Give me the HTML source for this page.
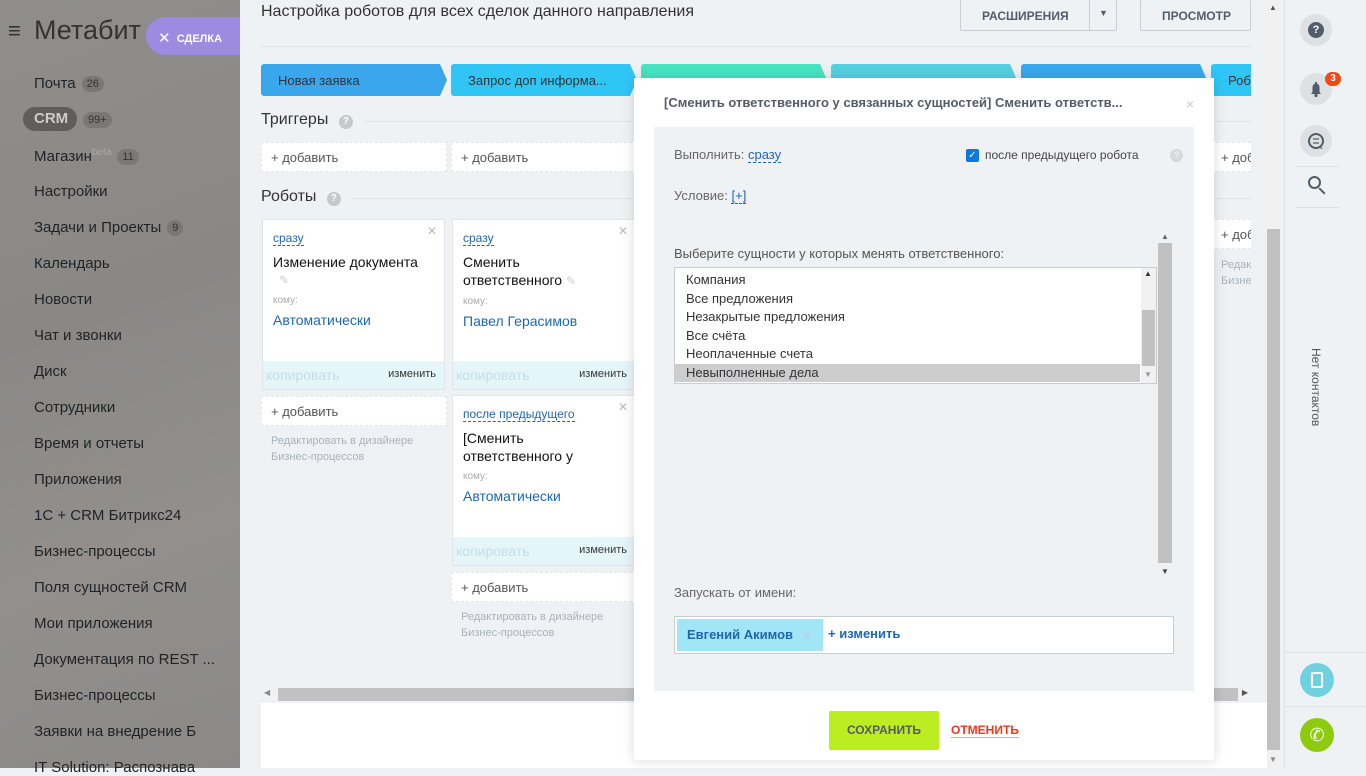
<!DOCTYPE html>
<html><head><meta charset="utf-8"><style>
*{box-sizing:border-box;margin:0;padding:0}
body{width:1366px;height:768px;overflow:hidden;position:relative;font-family:"Liberation Sans","DejaVu Sans",sans-serif;background:#eef2f4}
.abs{position:absolute}
#side{left:0;top:0;width:240px;height:768px;background:linear-gradient(160deg,#8f8e8c,#8a8886 40%,#928f8c 70%,#8b8987)}
.nav{position:absolute;left:34px;font-size:15px;color:#1f2326;white-space:nowrap}
.cnt{display:inline-block;background:#7a7876;color:#333;font-size:11px;border-radius:9px;padding:2px 5px;margin-left:6px;vertical-align:1px}
#main{left:240px;top:0;width:1028px;height:768px;background:#eef2f4}
.stage{position:absolute;top:64px;height:32px;color:#333;font-size:13px;padding:9px 0 0 17px;border-radius:3px 0 0 3px;clip-path:polygon(0 0,calc(100% - 7px) 0,100% 50%,calc(100% - 7px) 100%,0 100%);white-space:nowrap;overflow:hidden}
.addbox{position:absolute;background:#fff;border:1px dashed #e3e7ea;height:30px;font-size:13px;color:#555;padding:7px 0 0 9px;white-space:nowrap;overflow:hidden}
.card{position:absolute;background:#fff;border:1px solid #e0e5e8;width:183px}
.dash{color:#2067b0;border-bottom:1px dashed #2067b0;font-size:12px}
.x{position:absolute;right:7px;top:4px;color:#bbb;font-size:12px}
.ct{font-size:14px;color:#111;line-height:18px}
.komu{font-size:10px;color:#aaa}
.who{font-size:14px;color:#2067b0}
.cf{position:absolute;left:0;right:0;bottom:0;height:28px;background:#e5f6fb}
.cf .c{position:absolute;left:3px;top:6px;color:#c5dde5;font-size:14px}
.cf .e{position:absolute;right:8px;top:7px;color:#333;font-size:11px}
.hint{position:absolute;font-size:11px;color:#aab2b8;line-height:16px;white-space:nowrap;overflow:hidden}
#modal{left:634px;top:78px;width:580px;height:682px;background:#fff;box-shadow:0 0 12px rgba(0,0,0,.15)}
</style></head><body>
<div id="side" class="abs">
 <div class="abs" style="left:8px;top:18px;font-size:22px;color:#333">≡</div>
 <div class="abs" style="left:34px;top:15px;font-size:27px;color:#333">Метабит</div>
 <div class="abs" style="left:146px;top:17px;width:100px;height:38px;background:#9c8be0;border-radius:19px 0 0 19px;color:#fff;font-size:11px;font-weight:bold;padding:12px 0 0 12px"><span style="font-size:15px;font-weight:normal;vertical-align:-1px">✕</span>&nbsp; СДЕЛКА</div>
 <div class="nav" style="top:75px">Почта<span class="cnt">26</span></div>
 <div class="abs" style="left:23px;top:107px;width:54px;height:24px;background:#5f5e5c;border-radius:12px;color:#ccc;font-size:15px;font-weight:bold;padding:3px 0 0 11px">CRM</div>
 <div class="abs" style="left:83px;top:111px"><span class="cnt" style="margin:0">99+</span></div>
 <div class="nav" style="top:147px">Магазин<sup style="font-size:10px;color:#aaa">beta</sup><span class="cnt">11</span></div>
 <div class="nav" style="top:183px">Настройки</div>
 <div class="nav" style="top:219px">Задачи и Проекты<span class="cnt">9</span></div>
 <div class="nav" style="top:255px">Календарь</div>
 <div class="nav" style="top:291px">Новости</div>
 <div class="nav" style="top:327px">Чат и звонки</div>
 <div class="nav" style="top:363px">Диск</div>
 <div class="nav" style="top:399px">Сотрудники</div>
 <div class="nav" style="top:435px">Время и отчеты</div>
 <div class="nav" style="top:471px">Приложения</div>
 <div class="nav" style="top:507px">1С + CRM Битрикс24</div>
 <div class="nav" style="top:543px">Бизнес-процессы</div>
 <div class="nav" style="top:579px">Поля сущностей CRM</div>
 <div class="nav" style="top:615px">Мои приложения</div>
 <div class="nav" style="top:651px">Документация по REST ...</div>
 <div class="nav" style="top:687px">Бизнес-процессы</div>
 <div class="nav" style="top:723px">Заявки на внедрение Б</div>
 <div class="nav" style="top:759px">IT Solution: Распознава</div>
</div>
<div id="main" class="abs">
 <div class="abs" style="left:21px;top:3px;font-size:16px;color:#333">Настройка роботов для всех сделок данного направления</div>
 <div class="abs" style="left:720px;top:-1px;width:157px;height:32px;border:1px solid #c8ced2;border-radius:2px;font-size:12px;font-weight:bold;color:#535c69;padding:9px 0 0 21px">РАСШИРЕНИЯ<span style="position:absolute;left:128px;top:0;height:100%;border-left:1px solid #c8ced2"></span><span style="position:absolute;left:138px;top:8px;font-size:9px">▼</span></div>
 <div class="abs" style="left:900px;top:-1px;width:111px;height:32px;border:1px solid #c8ced2;border-radius:2px;font-size:12px;font-weight:bold;color:#535c69;padding:9px 0 0 21px">ПРОСМОТР</div>
 <div class="abs" style="left:21px;top:46px;width:990px;border-top:1px solid #dfe3e6"></div>
 <div class="stage" style="left:21px;width:186px;background:#3aa7ec">Новая заявка</div>
 <div class="stage" style="left:211px;width:186px;background:#2fc6f6">Запрос доп информа...</div>
 <div class="stage" style="left:401px;width:186px;background:#47e4c2"></div>
 <div class="stage" style="left:591px;width:186px;background:#55d0e0"></div>
 <div class="stage" style="left:781px;width:186px;background:#39a8ef"></div>
 <div class="stage" style="left:971px;width:40px;background:#2fc6f6;clip-path:none">Роб</div>
 <div class="abs" style="left:21px;top:111px;font-size:16px;color:#333">Триггеры <span style="display:inline-block;width:14px;height:14px;border-radius:7px;background:#c5c9cc;color:#fff;font-size:10px;text-align:center;line-height:14px;margin-left:6px;font-weight:bold">?</span></div>
 <div class="abs" style="left:125px;top:121px;width:886px;border-top:1px solid #dfe3e6"></div>
 <div class="addbox" style="left:21px;top:142px;width:186px">+ добавить</div>
 <div class="addbox" style="left:211px;top:142px;width:186px">+ добавить</div>
 <div class="addbox" style="left:971px;top:142px;width:40px;border-right:0">+ доб</div>
 <div class="abs" style="left:21px;top:188px;font-size:16px;color:#333">Роботы <span style="display:inline-block;width:14px;height:14px;border-radius:7px;background:#c5c9cc;color:#fff;font-size:10px;text-align:center;line-height:14px;margin-left:6px;font-weight:bold">?</span></div>
 <div class="abs" style="left:112px;top:198px;width:899px;border-top:1px solid #dfe3e6"></div>
 <div class="card" style="left:22px;top:219px;height:171px;padding:9px 10px"><span class="dash">сразу</span><span class="x">✕</span>
  <div class="ct" style="margin-top:6px">Изменение документа</div><div style="color:#ccc;font-size:12px;margin:2px 0 0 6px;height:18px">✎</div>
  <div class="komu" style="margin-top:4px">кому:</div><div class="who" style="margin-top:6px">Автоматически</div>
  <div class="cf"><span class="c">копировать</span><span class="e">изменить</span></div></div>
 <div class="card" style="left:212px;top:219px;height:171px;padding:9px 10px;border-right:0"><span class="dash">сразу</span><span class="x">✕</span>
  <div class="ct" style="margin-top:6px">Сменить<br>ответственного <span style="color:#ccc;font-size:12px">✎</span></div>
  <div class="komu" style="margin-top:6px">кому:</div><div class="who" style="margin-top:6px">Павел Герасимов</div>
  <div class="cf"><span class="c">копировать</span><span class="e">изменить</span></div></div>
 <div class="addbox" style="left:21px;top:396px;width:186px">+ добавить</div>
 <div class="hint" style="left:31px;top:433px">Редактировать в дизайнере<br>Бизнес-процессов</div>
 <div class="card" style="left:212px;top:395px;height:171px;padding:9px 10px;border-right:0"><span class="dash">после предыдущего</span><span class="x">✕</span>
  <div class="ct" style="margin-top:6px">[Сменить<br>ответственного у</div>
  <div class="komu" style="margin-top:6px">кому:</div><div class="who" style="margin-top:6px">Автоматически</div>
  <div class="cf"><span class="c">копировать</span><span class="e">изменить</span></div></div>
 <div class="addbox" style="left:211px;top:572px;width:186px">+ добавить</div>
 <div class="hint" style="left:221px;top:609px">Редактировать в дизайнере<br>Бизнес-процессов</div>
 <div class="addbox" style="left:971px;top:219px;width:40px;border-right:0">+ доб</div>
 <div class="hint" style="left:981px;top:257px;width:30px">Редак<br>Бизне</div>
 <div class="abs" style="left:21px;top:688px;width:990px;height:13px;background:#f1f1f1"><div style="position:absolute;left:17px;top:0;width:960px;height:13px;background:#c1c1c1"></div><span style="position:absolute;left:3px;top:0;font-size:8px;color:#888">◀</span><span style="position:absolute;right:3px;top:0;font-size:8px;color:#555">▶</span></div>
 <div class="abs" style="left:21px;top:703px;width:1007px;height:65px;background:#fff"></div>
 <div class="abs" style="left:1027px;top:0;width:16px;height:768px;background:#f1f1f1"><div style="position:absolute;left:0;top:229px;width:13px;height:521px;background:#c1c1c1"></div><span style="position:absolute;left:2px;top:3px;font-size:8px;color:#555">▲</span><span style="position:absolute;left:2px;top:755px;font-size:8px;color:#888">▼</span></div>
</div>
<div class="abs" style="left:1284px;top:0;width:82px;height:768px;background:#eef2f4;border-left:1px solid #dde2e5">
 <div class="abs" style="left:15px;top:14px;width:32px;height:32px;border-radius:16px;background:#dde1e4"><div style="margin:8px;width:16px;height:16px;border-radius:8px;background:#535c69;color:#fff;font-size:11px;font-weight:bold;text-align:center;line-height:16px">?</div></div>
 <div class="abs" style="left:15px;top:73px;width:32px;height:32px;border-radius:16px;background:#dde1e4">
  <svg width="32" height="32" viewBox="0 0 32 32"><path d="M11 21h10l-1.5-2v-5a3.5 3.5 0 0 0-7 0v5z" fill="#535c69"/><circle cx="16" cy="22.5" r="1.6" fill="#535c69"/><rect x="15" y="9" width="2" height="2" fill="#535c69"/></svg></div>
 <div class="abs" style="left:40px;top:72px;width:16px;height:14px;border-radius:7px;background:#f54819;color:#fff;font-size:10px;font-weight:bold;text-align:center;line-height:14px">3</div>
 <div class="abs" style="left:15px;top:125px;width:32px;height:32px;border-radius:16px;background:#dde1e4">
  <svg width="32" height="32" viewBox="0 0 32 32"><circle cx="16" cy="16" r="7" fill="none" stroke="#535c69" stroke-width="2"/><path d="M20 21l3 3-4-1z" fill="#535c69"/><path d="M13 14h6M13 18h6" stroke="#535c69" stroke-width="1.3"/></svg></div>
 <div class="abs" style="left:10px;top:166px;width:44px;border-top:1px solid #dde2e5"></div>
 <div class="abs" style="left:23px;top:176px;width:13px;height:13px;border-radius:7px;border:2px solid #535c69"></div>
 <div class="abs" style="left:33px;top:190px;width:8px;height:2px;background:#535c69;transform:rotate(45deg)"></div>
 <div class="abs" style="left:10px;top:207px;width:44px;border-top:1px solid #dde2e5"></div>
 <div class="abs" style="left:24px;top:348px;font-size:12px;color:#555;writing-mode:vertical-rl">Нет контактов</div>
 <div class="abs" style="left:0;top:652px;width:82px;border-top:1px solid #dde2e5"></div>
 <div class="abs" style="left:15px;top:663px;width:34px;height:34px;border-radius:17px;background:#6fd1e0"><div style="margin:9px 11px;width:12px;height:16px;border:2px solid #fff;border-radius:2px"></div></div>
 <div class="abs" style="left:0;top:706px;width:82px;border-top:1px solid #dde2e5"></div>
 <div class="abs" style="left:15px;top:718px;width:34px;height:34px;border-radius:17px;background:#8ecb0f;color:#fff;text-align:center;line-height:34px;font-size:18px">✆</div>
</div>
<div id="modal" class="abs">
 <div class="abs" style="left:30px;top:17px;font-size:13px;font-weight:bold;color:#535c69">[Сменить ответственного у связанных сущностей] Сменить ответств...</div>
 <div class="abs" style="left:552px;top:18px;font-size:14px;color:#ccc">×</div>
 <div class="abs" style="left:20px;top:49px;width:540px;height:564px;background:#eef2f4">
  <div class="abs" style="left:20px;top:20px;font-size:13px;color:#666">Выполнить: <span style="color:#2067b0;border-bottom:1px dashed #2067b0">сразу</span></div>
  <div class="abs" style="left:312px;top:22px;width:13px;height:13px;background:#0b78e3;border-radius:2px;color:#fff;font-size:10px;line-height:13px;text-align:center">✓</div>
  <div class="abs" style="left:331px;top:21px;font-size:12px;color:#444">после предыдущего робота</div>
  <div class="abs" style="left:516px;top:22px;width:13px;height:13px;border-radius:7px;background:#d5d9dc;color:#fff;font-size:9px;text-align:center;line-height:13px">?</div>
  <div class="abs" style="left:20px;top:61px;font-size:13px;color:#666">Условие: <span style="color:#2067b0;border-bottom:1px dashed #2067b0">[+]</span></div>
  <div class="abs" style="left:504px;top:107px;width:14px;height:338px;background:#eef2f4"><div style="position:absolute;left:0;top:9px;width:14px;height:320px;background:#c1c1c1"></div><span style="position:absolute;left:3px;top:-2px;font-size:8px;color:#666">▲</span><span style="position:absolute;left:3px;top:333px;font-size:8px;color:#444">▼</span></div>
  <div class="abs" style="left:20px;top:119px;font-size:13px;color:#555">Выберите сущности у которых менять ответственного:</div>
  <div class="abs" style="left:20px;top:140px;width:483px;height:117px;background:#fff;border:1px solid #c6cdd3;font-size:13px;color:#333;line-height:18.5px;padding-top:3px">
   <div style="padding-left:11px">Компания</div><div style="padding-left:11px">Все предложения</div><div style="padding-left:11px">Незакрытые предложения</div><div style="padding-left:11px">Все счёта</div><div style="padding-left:11px">Неоплаченные счета</div><div style="padding-left:11px;background:#cdcdcd;margin-right:16px">Невыполненные дела</div>
   <div style="position:absolute;right:0;top:0;width:15px;height:115px;background:#f1f1f1"><div style="position:absolute;left:1px;top:42px;width:13px;height:56px;background:#c1c1c1"></div><span style="position:absolute;left:3px;top:1px;font-size:8px;line-height:10px">▲</span><span style="position:absolute;left:3px;top:102px;font-size:8px;line-height:10px;color:#999">▼</span></div>
  </div>
  <div class="abs" style="left:20px;top:458px;font-size:13px;color:#666">Запускать от имени:</div>
  <div class="abs" style="left:20px;top:489px;width:500px;height:38px;background:#fff;border:1px solid #c6cdd3">
   <div style="position:absolute;left:2px;top:2px;width:146px;height:32px;background:#a0e6f7;font-size:13px;font-weight:bold;color:#2067b0;padding:8px 0 0 10px">Евгений Акимов <span style="color:#bcd;font-weight:normal;margin-left:6px;font-size:11px">✕</span></div>
   <div style="position:absolute;left:153px;top:9px;font-size:13px;font-weight:bold;color:#2067b0">+ изменить</div>
  </div>
 </div>
 <div class="abs" style="left:195px;top:633px;width:110px;height:39px;background:#bbed21;border-radius:2px;font-size:12px;font-weight:bold;color:#535c69;text-align:center;line-height:39px">СОХРАНИТЬ</div>
 <div class="abs" style="left:317px;top:645px;font-size:12px;font-weight:bold;color:#f1361b;border-bottom:1px solid #f7a090">ОТМЕНИТЬ</div>
</div>
</body></html>
